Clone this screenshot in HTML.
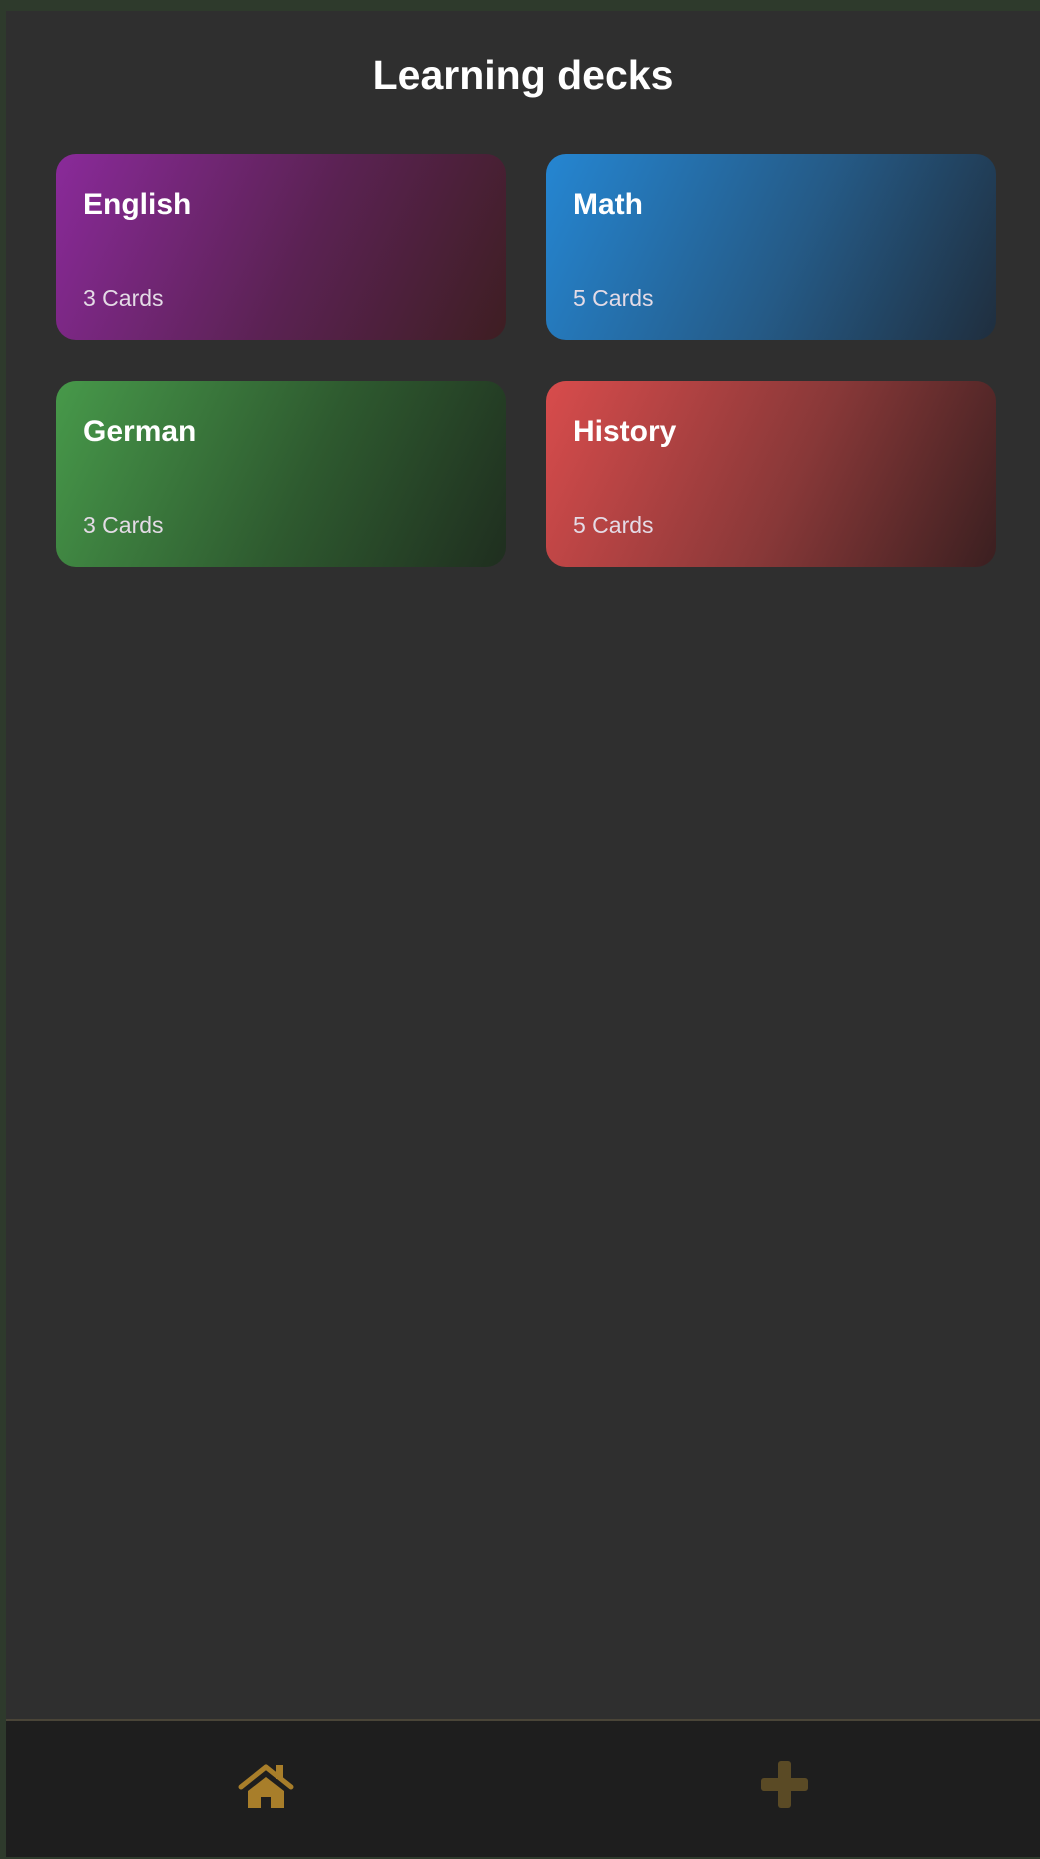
<!DOCTYPE html>
<html><head><style>
html,body{margin:0;padding:0;width:1040px;height:1859px;overflow:hidden;background:#2e3a2c;font-family:"Liberation Sans",sans-serif;}
.panel{position:absolute;left:6px;top:11px;right:0;height:1708px;background:#2f2f2f;}
h1{position:absolute;left:0;right:0;top:41px;margin:0;text-align:center;color:#fff;font-size:41px;font-weight:bold;}
.card{position:absolute;width:450px;height:186px;border-radius:20px;color:#fff;}
.card .t{position:absolute;left:27px;top:34px;font-size:30px;font-weight:bold;}
.card .c{position:absolute;left:27px;top:131px;font-size:23px;color:#e4dbe6;}
.nav{position:absolute;left:6px;right:0;top:1719px;height:136px;background:#1e1e1e;border-top:2px solid #4a4538;}
</style></head><body>
<div class="panel">
<h1>Learning decks</h1>
</div>
<div class="card" style="left:56px;top:154px;background:linear-gradient(115deg,#8a2a9a 0%,#5a2252 55%,#3e1e22 100%)"><div class="t">English</div><div class="c">3 Cards</div></div>
<div class="card" style="left:546px;top:154px;background:linear-gradient(115deg,#2586d2 0%,#255a86 55%,#1f2e3e 100%)"><div class="t">Math</div><div class="c">5 Cards</div></div>
<div class="card" style="left:56px;top:381px;background:linear-gradient(115deg,#47994a 0%,#2e5a2f 55%,#1f2e1f 100%)"><div class="t">German</div><div class="c">3 Cards</div></div>
<div class="card" style="left:546px;top:381px;background:linear-gradient(115deg,#d84c4c 0%,#883838 55%,#3a1f20 100%)"><div class="t">History</div><div class="c">5 Cards</div></div>
<div class="nav"></div>
<svg style="position:absolute;left:238px;top:1763px" width="56" height="46" viewBox="0 0 56 46">
<path d="M3 24 L28 4 L53 24" fill="none" stroke="#a87e2a" stroke-width="5" stroke-linecap="round" stroke-linejoin="round"/>
<rect x="38" y="2" width="7" height="14" fill="#a87e2a"/>
<path d="M10 28 L28 14 L46 28 L46 45 L33 45 L33 34 L23 34 L23 45 L10 45 Z" fill="#a87e2a"/>
</svg>
<svg style="position:absolute;left:761px;top:1761px" width="47" height="47" viewBox="0 0 47 47">
<rect x="17" y="0" width="13" height="47" rx="3" fill="#5a4a25"/>
<rect x="0" y="17" width="47" height="13" rx="3" fill="#5a4a25"/>
</svg>
</body></html>
